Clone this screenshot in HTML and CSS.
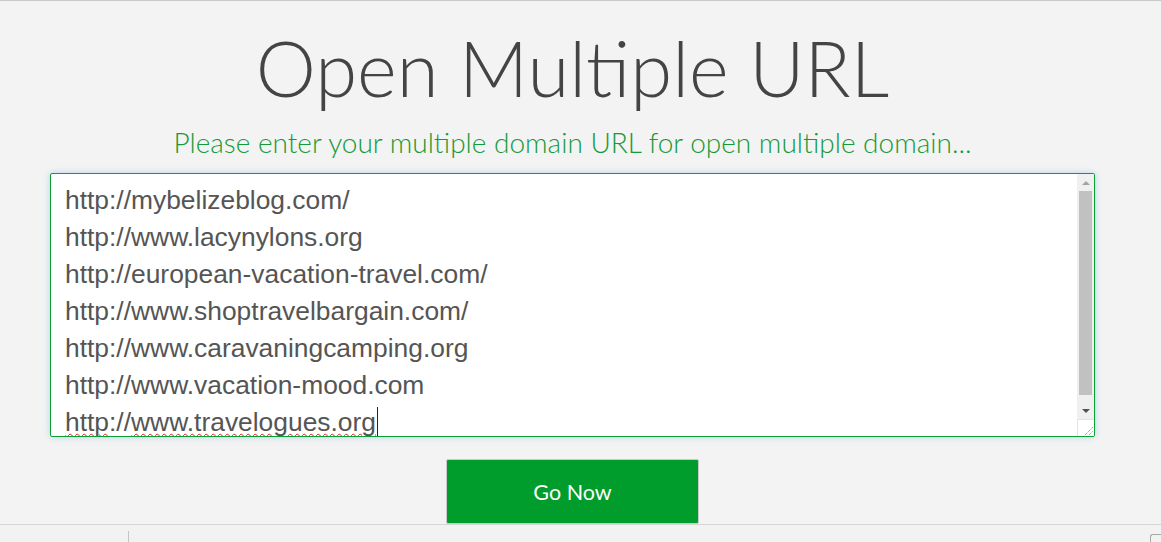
FILE: index.html
```html
<!DOCTYPE html>
<html lang="en">
<head>
    <meta charset="UTF-8">
    <meta name="viewport" content="width=device-width, initial-scale=1.0">
    <title>Open Multiple URL</title>
    <link rel="stylesheet" href="styles.css">
</head>
<body>
    <main class="page">
        <h1 class="title">Open Multiple URL</h1>
        <p class="subtitle">Please enter your multiple domain URL for open multiple domain...</p>

        <div class="url-box">
            <div class="url-list" contenteditable="true" spellcheck="false">
                <div>http://mybelizeblog.com/</div>
                <div>http://www.lacynylons.org</div>
                <div>http://european-vacation-travel.com/</div>
                <div>http://www.shoptravelbargain.com/</div>
                <div>http://www.caravaningcamping.org</div>
                <div>http://www.vacation-mood.com</div>
                <div><span class="typo">http</span>://<span class="typo">www.travelogues.org</span><span class="caret"></span></div>
            </div>
            <!-- barre de défilement dessinée à la main -->
            <div class="scrollbar">
                <div class="arrow arrow-up"></div>
                <div class="track"><div class="thumb"></div></div>
                <div class="arrow arrow-down"></div>
                <div class="grip">
                    <svg width="10" height="10" viewBox="0 0 10 10">
                        <path d="M2 10 L10 2 M6 10 L10 6" stroke="#777" stroke-width="1" stroke-dasharray="1 1" fill="none"/>
                    </svg>
                </div>
            </div>
        </div>

        <button class="go-btn">Go Now</button>
    </main>

    <footer class="status-bar">
        <div class="status-left"></div>
        <div class="status-right"><span class="status-box"></span></div>
    </footer>
</body>
</html>
```

FILE: styles.css
```css
html, body {
    height: 100%;
}
body {
    margin: 0;
    font-family: Lato, "Open Sans", sans-serif;
    background-color: #f3f3f3;
    border-top: 1px solid #c8c8c8;
    box-sizing: border-box;
    display: flex;
    flex-direction: column;
    overflow: hidden;
}
.page {
    flex: 1;
    display: flex;
    flex-direction: column;
    align-items: center;
    padding: 0 66px 0 50px;
}
.title {
    margin: 19px 0 0;
    font-size: 76px;
    font-weight: 300;
    line-height: 96px;
    color: #444;
}
.subtitle {
    margin: 8px 0 13px;
    font-size: 28px;
    font-weight: 300;
    line-height: 36px;
    color: #159a37;
}
.url-box {
    align-self: stretch;
    display: flex;
    height: 262px;
    background-color: #fff;
    border: 1px solid #0aa032;
    border-radius: 2px;
    box-shadow: 0 0 6px rgba(102, 175, 233, 0.45);
}
.url-list {
    flex: 1;
    padding: 8px 14px 0;
    font-family: "Liberation Sans", Arial, sans-serif;
    font-size: 26.4px;
    line-height: 37px;
    color: #555;
    overflow: hidden;
    outline: none;
}
.typo {
    text-decoration: underline wavy #e01b1b;
    text-decoration-thickness: 1px;
    text-underline-offset: 2px;
}
.caret {
    display: inline-block;
    width: 1px;
    height: 30px;
    margin-left: 1px;
    vertical-align: -6px;
    background-color: #222;
}
.scrollbar {
    width: 17px;
    display: flex;
    flex-direction: column;
    background-color: #f0f0f0;
}
.arrow {
    height: 17px;
    display: flex;
    align-items: center;
    justify-content: center;
}
.arrow::before {
    content: "";
    border-left: 4px solid transparent;
    border-right: 4px solid transparent;
}
.arrow-up::before {
    border-bottom: 4px solid #a3a3a3;
}
.arrow-down::before {
    border-top: 4px solid #505050;
}
.track {
    flex: 1;
    padding: 0 2px;
    display: flex;
}
.thumb {
    flex: 1;
    margin-bottom: 7px;
    background-color: #c1c1c1;
}
.grip {
    height: 17px;
    background-color: #fff;
    border-top: 1px solid #e3e3e3;
    border-left: 1px solid #e3e3e3;
    box-sizing: border-box;
    display: flex;
    align-items: flex-end;
    justify-content: flex-end;
    padding: 0 1px 1px 0;
}
.go-btn {
    margin-top: 22px;
    width: 253px;
    height: 65px;
    font-family: Lato, sans-serif;
    font-size: 21.5px;
    font-weight: 400;
    color: #fff;
    background-color: #009c2c;
    border: 1px solid #c9c9c9;
    border-radius: 2px;
    cursor: pointer;
}
.status-bar {
    height: 17px;
    flex-shrink: 0;
    border-top: 1px solid #d5d5d5;
    background-color: #f2f2f2;
    display: flex;
}
.status-left {
    width: 128px;
    border-right: 1px solid #c4c4c4;
    margin-top: 6px;
}
.status-right {
    flex: 1;
    display: flex;
    justify-content: flex-end;
}
.status-box {
    width: 10px;
    margin-top: 9px;
    border: 1px solid #a8a8a8;
    border-right: none;
    border-bottom: none;
    border-radius: 3px 0 0 0;
}
```
